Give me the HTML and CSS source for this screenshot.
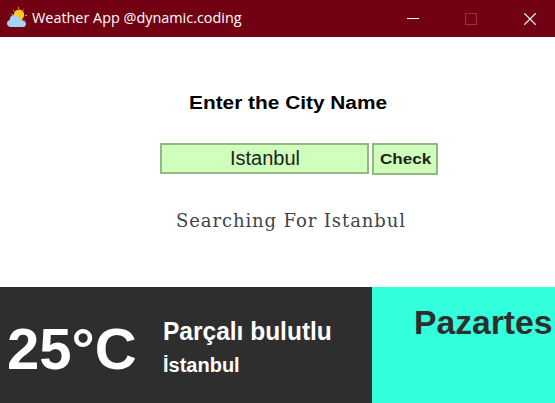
FILE: index.html
```html
<!DOCTYPE html>
<html lang="tr">
<head>
<meta charset="utf-8">
<title>Weather App</title>
<link rel="stylesheet" href="styles.css">
</head>
<body>
<div class="window">
  <header class="titlebar">
    <svg class="logo" width="21" height="21" viewBox="0 0 21 21">
      <path d="M6 3l1.500 1.400M11.500 0v2M17 2.500l-1.600 1.600M18 8.500h2M16.500 13l1.500 1.200M4.500 7.500h1.500" stroke="#e8a020" stroke-width="1" fill="none"/>
      <circle cx="12" cy="7.700" r="5.200" fill="#ffc91f"/>
      <path d="M4 20C1.700 20 0 18.400 0 16.400C0 14.600 1 13.300 2.800 13C2.700 10 4.500 8 7.300 8C9.800 8 11.600 9.600 12 11.800C14 11.200 15.800 12.300 16.100 14C18 14.100 19 15.300 19 17C19 18.800 17.700 20 16 20Z" fill="#a5d3f7"/>
    </svg>
    <span class="title"><span class="fit">Weather App @dynamic.coding</span></span>
    <svg class="controls" width="130" height="12" viewBox="0 0 130 12">
      <path d="M0 5.500h12" stroke="#fff"/>
      <rect x="58.500" y=".5" width="11" height="11" fill="none" stroke="#943542"/>
      <path d="M117.300 .3l11.400 11.400M128.700 .3l-11.400 11.400" stroke="#fff" stroke-width="1.200"/>
    </svg>
  </header>
  <main class="search">
    <h1 class="prompt"><span class="fit">Enter the City Name</span></h1>
    <div class="form">
      <div class="city"><span class="fit">Istanbul</span></div>
      <div class="check"><span class="fit">Check</span></div>
    </div>
    <p class="status"><span class="fit">Searching For Istanbul</span></p>
  </main>
  <section class="result">
    <div class="current">
      <div class="temp"><span class="fit">25°C</span></div>
      <div class="info">
        <div class="cond"><span class="fit">Parçalı bulutlu</span></div>
        <div class="place"><span class="fit">İstanbul</span></div>
      </div>
    </div>
    <div class="day"><span class="fit">Pazartes</span></div>
  </section>
</div>
</body>
</html>
```
FILE: styles.css
```css
* { box-sizing: border-box; margin: 0; padding: 0; }
body { width: 555px; height: 403px; overflow: hidden; background: #fff; font-family: "Liberation Sans", Arial, sans-serif; }
.window { display: flex; flex-direction: column; height: 403px; }
.fit { display: inline-block; white-space: nowrap; transform-origin: 0 50%; }
.titlebar { flex: none; display: flex; align-items: center; height: 37px; background: #720213; color: #fff; padding: 0 18px 0 7px; }
.logo { margin-top: -3px; overflow: visible; }
.title { flex: 1; margin: -3px 0 0 4px; font: 15px/20px "Open Sans", sans-serif; }
.title .fit { transform: scaleX(.96); }
.search { flex: none; height: 250px; }
.prompt { margin: 56px 0 0 188.500px; font-size: 18px; line-height: 20px; font-weight: bold; color: #000; }
.prompt .fit { transform: scaleX(1.158); }
.form { display: flex; align-items: flex-start; gap: 3px; margin: 30px 0 0 160px; }
.city, .check { background: #cfffbb; border: 2px solid #93b786; color: #1c241c; }
.city { width: 209px; height: 31px; padding-left: 68px; font-size: 20px; line-height: 27px; }
.check { width: 66px; height: 32px; padding-left: 6px; font-size: 15px; line-height: 28px; font-weight: bold; }
.check .fit { transform: scaleX(1.14); }
.status { margin: 35px 0 0 176px; font: 18px/22px "DejaVu Serif", serif; color: #40444a; }
.status .fit { letter-spacing: .9px; }
.result { flex: 1; display: flex; overflow: hidden; font-weight: bold; }
.current { flex: none; display: flex; width: 372px; background: #2e2e2e; color: #fff; }
.temp { width: 155px; padding: 31px 0 0 7px; font-size: 58px; line-height: 62px; }
.info { padding: 29px 0 0 8px; }
.cond { font-size: 25px; line-height: 30px; }
.cond .fit { transform: scaleX(.98); }
.place { font-size: 20px; line-height: 24px; margin-top: 7px; }
.day { flex: 1; background: #33ffdd; color: #2e2e2e; padding: 15px 0 0 42px; font-size: 34px; line-height: 40px; }
.day .fit { transform: scaleX(.99); }
```
